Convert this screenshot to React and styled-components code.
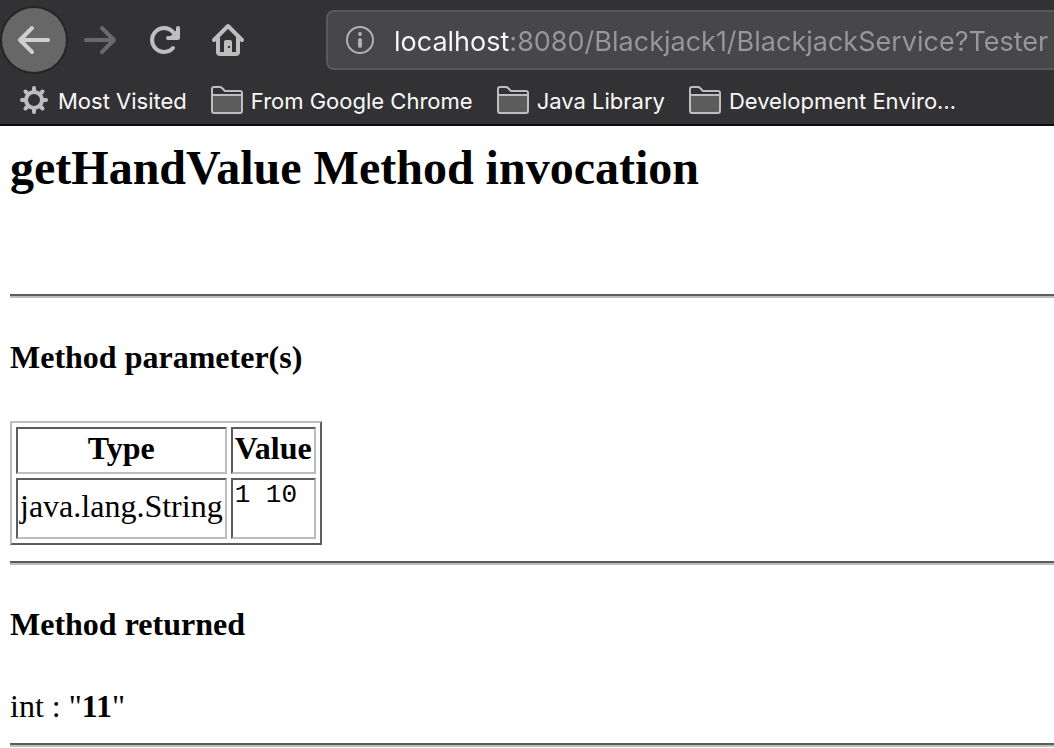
import React, { useState } from "react";
import styled, { createGlobalStyle } from "styled-components";

const GlobalStyle = createGlobalStyle`
  * { box-sizing: border-box; }
  body { margin: 0; background: #fff; overflow-x: hidden; }
`;

const Chrome = styled.header`
  background: #323234;
  border-bottom: 2px solid #0c0c0d;
  font-family: Inter, "Liberation Sans", sans-serif;
`;

const Toolbar = styled.nav`
  display: flex;
  align-items: center;
  height: 80px;
  padding-left: 2px;
`;

const ToolButton = styled.button`
  flex: none;
  display: grid;
  place-items: center;
  width: 64px;
  height: 64px;
  margin: 0;
  margin-right: ${(p) => (p.$round ? "2px" : "0")};
  padding: 0;
  border: 0;
  border-radius: 50%;
  color: ${(p) => (p.$dim ? "#6a6a6b" : p.$round ? "#d0d0d0" : "#bebebe")};
  background: ${(p) => (p.$round ? "#676767" : "transparent")};
  box-shadow: ${(p) => (p.$round ? "0 0 0 2px #252526" : "none")};
`;

const AddressBar = styled.label`
  flex: 1;
  min-width: 0;
  display: flex;
  align-items: center;
  gap: 18px;
  height: 60px;
  margin-left: 66px;
  padding-left: 16px;
  color: #b1b1b3;
  background: #474749;
  border: 2px solid #59595b;
  border-right: 0;
  border-radius: 8px 0 0 8px;
`;

const AddressInput = styled.input`
  flex: 1;
  min-width: 0;
  height: 44px;
  padding: 3px 0 0;
  border: 0;
  outline: 0;
  font: 400 27px/40px Inter, "Liberation Sans", sans-serif;
  color: #a0a0a1;
  -webkit-text-fill-color: transparent;
  background: linear-gradient(to right, #f9f9fa 116px, #98989a 116px);
  background-clip: text;
`;

const Bookmarks = styled.nav`
  display: flex;
  align-items: center;
  gap: 24px;
  height: 44px;
  padding: 0 20px 4px;
`;

const Bookmark = styled.a`
  display: flex;
  align-items: center;
  gap: 8px;
  font-size: 22px;
  line-height: 28px;
  white-space: nowrap;
  color: #f9f9fa;
  text-decoration: none;
  svg { flex: none; }
  span { padding-top: 2px; }
`;

const Page = styled.main`
  padding: 14px 0 0 10px;
  font: 32px/36px "Liberation Serif", serif;
  color: #000;
`;

const Title = styled.h1`
  margin: 0 0 98px;
  font-size: 48px;
  line-height: 56px;
`;

const Heading = styled.h2`
  margin: 0;
  padding: 41px 0 46px;
  font-size: 32px;
  line-height: 36px;
`;

const Rule = styled.hr`
  height: 4px;
  margin: 0;
  border: 0;
  border-top: 2px solid #5c5c5c;
  border-bottom: 2px solid #bdbdbd;
`;

const Params = styled.table`
  margin-bottom: 16px;
  border: 2px solid;
  border-color: #bdbdbd #5c5c5c #5c5c5c #bdbdbd;
  border-collapse: separate;
  border-spacing: 4px;

  th, td {
    padding: 2px;
    border: 2px solid;
    border-color: #5c5c5c #bdbdbd #bdbdbd #5c5c5c;
  }
  th { padding: 1px 2px 6px; }
  td:first-child { padding-bottom: 8px; }
`;

const Value = styled.pre`
  margin: 0 0 26px;
  font: 26px/27px "Liberation Mono", monospace;
`;

const Result = styled.p`
  margin: 0;
  padding-bottom: 19px;
`;

const Stroke = ({ children }) => (
  <svg width="32" height="32" viewBox="0 0 32 32" fill="none" stroke="currentColor"
    strokeWidth="4" strokeLinecap="round" strokeLinejoin="round" overflow="visible" aria-hidden="true">
    {children}
  </svg>
);

const BackIcon = () => <Stroke><path d="M30 16H3M14 4L2 16l12 12" /></Stroke>;
const ForwardIcon = () => <Stroke><path d="M2 16h27M18 4l12 12-12 12" /></Stroke>;
const ReloadIcon = () => (
  <Stroke>
    <path d="M25 24A12 12 0 1 1 25 8L28 12" />
    <path d="M30 4v10H20" />
    <path d="M29 7v6h-6z" fill="currentColor" strokeWidth="2" />
  </Stroke>
);
const HomeIcon = () => (
  <Stroke>
    <path d="M2 16L16 2l14 14M6 14v14q0 2 2 2h16q2 0 2-2V14" />
    <path fill="currentColor" stroke="none" fillRule="evenodd"
      d="M12 30V18q0-2 2-2h4q2 0 2 2v12zM16 22v2h2v-2z" />
  </Stroke>
);
const InfoIcon = () => (
  <svg width="32" height="32" viewBox="0 0 32 32" fill="currentColor" aria-hidden="true">
    <circle cx="16" cy="16" r="13" fill="none" stroke="currentColor" strokeWidth="2" />
    <circle cx="16" cy="10" r="2" />
    <rect x="14" y="14" width="4" height="10" rx="2" />
  </svg>
);
const GearIcon = () => (
  <svg width="30" height="28" viewBox="0 0 30 28" fill="none" stroke="#bebebe" aria-hidden="true">
    <circle cx="14" cy="14" r="8" strokeWidth="4" />
    <path strokeWidth="4" strokeLinecap="round"
      d="M14 2v3M14 23v3M2 14h3M23 14h3M5.500 5.500l2 2M20.500 20.500l2 2M5.500 22.500l2-2M20.500 7.500l2-2" />
  </svg>
);
const FolderIcon = () => (
  <svg width="32" height="28" viewBox="0 0 32 28" fill="none" aria-hidden="true">
    <path d="M1 9h30v16q0 2-2 2H3q-2 0-2-2z" fill="#5c5c5d" />
    <path d="M1 9V3q0-2 2-2h6q1 0 2 1l3 3h15q2 0 2 2v18q0 2-2 2H3q-2 0-2-2V9h30"
      stroke="#bebebe" strokeWidth="2" strokeLinejoin="round" />
  </svg>
);

const folders = ["From Google Chrome", "Java Library", "Development Enviro…"];

export default function App() {
  const [url, setUrl] = useState("localhost:8080/Blackjack1/BlackjackService?Tester");
  return (
    <>
      <GlobalStyle />
      <Chrome>
        <Toolbar aria-label="Navigation">
          <ToolButton $round aria-label="Back"><BackIcon /></ToolButton>
          <ToolButton $dim disabled aria-label="Forward"><ForwardIcon /></ToolButton>
          <ToolButton aria-label="Reload"><ReloadIcon /></ToolButton>
          <ToolButton aria-label="Home"><HomeIcon /></ToolButton>
          <AddressBar>
            <InfoIcon />
            <AddressInput aria-label="Address" value={url} spellCheck={false}
              onChange={(e) => setUrl(e.target.value)} />
          </AddressBar>
        </Toolbar>
        <Bookmarks aria-label="Bookmarks">
          <Bookmark href="#most-visited"><GearIcon /><span>Most Visited</span></Bookmark>
          {folders.map((name) => (
            <Bookmark key={name} href="#folder"><FolderIcon /><span>{name}</span></Bookmark>
          ))}
        </Bookmarks>
      </Chrome>
      <Page>
        <Title>getHandValue Method invocation</Title>
        <Rule />
        <Heading>Method parameter(s)</Heading>
        <Params>
          <thead>
            <tr><th scope="col">Type</th><th scope="col">Value</th></tr>
          </thead>
          <tbody>
            <tr><td>java.lang.String</td><td><Value>1 10</Value></td></tr>
          </tbody>
        </Params>
        <Rule />
        <Heading>Method returned</Heading>
        <Result>int : "<b>11</b>"</Result>
        <Rule />
      </Page>
    </>
  );
}
